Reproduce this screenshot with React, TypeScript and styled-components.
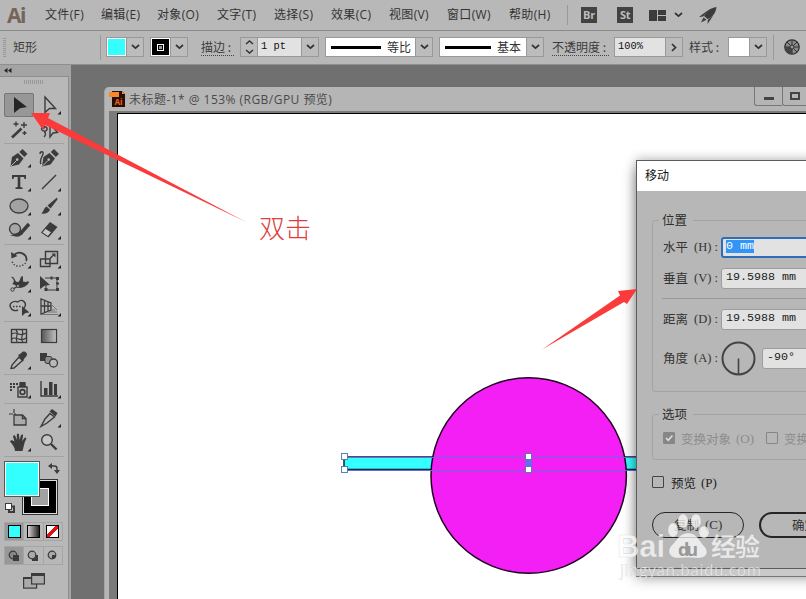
import React from "react";
import styled, { createGlobalStyle, css } from "styled-components";

const sans = `"Noto Sans CJK SC", "Noto Sans", sans-serif`;
const ui = `"Open Sans", "Noto Sans CJK SC", sans-serif`;
const serif = `"Liberation Serif", "Noto Sans CJK SC", serif`;
const mono = `"Liberation Mono", "Noto Sans CJK SC", monospace`;
const ink = "#3b3b3b";
const chrome = "#b8b8b8";

const Global = createGlobalStyle`
  * { box-sizing: border-box; }
  body { margin: 0; background: #707070; overflow: hidden; }
`;

const Shell = styled.div`
  position: relative;
  width: 806px;
  height: 599px;
  overflow: hidden;
  display: flex;
  flex-direction: column;
  background: #707070;
  color: ${ink};
  font: 12px/16px ${ui};
  white-space: pre;
`;

/* ---------- menu bar ---------- */
const MenuBar = styled.header`
  display: flex;
  align-items: center;
  flex: none;
  height: 31px;
  background: ${chrome};
  border-bottom: 1px solid #8b8b8b;
`;
const Logo = styled.div`
  width: 45px;
  padding-left: 7px;
  font: 700 21px/28px "Open Sans", sans-serif;
  letter-spacing: -1.4px;
  color: #75645a;
`;
const MenuItem = styled.div<{ $w: number }>`
  width: ${(p) => p.$w}px;
  color: #333;
  letter-spacing: 0.35px;
`;
const Rule = styled.div<{ $h: number; $mr: number }>`
  width: 1px;
  height: ${(p) => p.$h}px;
  margin-right: ${(p) => p.$mr}px;
  background: #999;
`;
const AppTile = styled.div<{ $mr: number }>`
  width: 16px;
  height: 16px;
  margin-right: ${(p) => p.$mr}px;
  background: #424242;
  color: #bdbdbd;
  font: 700 11px/16px "Open Sans", sans-serif;
  text-align: center;
  letter-spacing: -0.3px;
`;
const Icon = styled.svg<{ $mr?: number }>`
  display: block;
  flex: none;
  margin-right: ${(p) => p.$mr ?? 0}px;
  overflow: visible;
`;

/* ---------- options bar ---------- */
const OptionsBar = styled.div`
  display: flex;
  align-items: center;
  flex: none;
  height: 34px;
  padding: 0 0 1px 3px;
  background: ${chrome};
  border-bottom: 1px solid #8f8f8f;
`;
const Grip = styled.div<{ $w: number; $h: number; $mr?: number }>`
  width: ${(p) => p.$w}px;
  height: ${(p) => p.$h}px;
  margin-right: ${(p) => p.$mr ?? 0}px;
  background: repeating-linear-gradient(
    ${(p) => (p.$h > p.$w ? "180deg" : "90deg")},
    #989898 0 1px,
    ${chrome} 1px 2px
  );
`;
const BarText = styled.div<{ $w: number }>`
  width: ${(p) => p.$w}px;
  font: 12px/16px ${sans};
`;
const BarLink = styled.div<{ $w: number; $mr: number }>`
  width: ${(p) => p.$w}px;
  margin-right: ${(p) => p.$mr}px;
  height: 17px;
  font: 12px/16px ${sans};
  border-bottom: 1px dotted #444;
`;
const Control = styled.div<{ $mr: number }>`
  display: flex;
  flex: none;
  height: 20px;
  margin-right: ${(p) => p.$mr}px;
  border: 1px solid #999;
`;
const Swatch = styled.div<{ $c: string; $w: number }>`
  display: flex;
  align-items: center;
  justify-content: center;
  width: ${(p) => p.$w}px;
  background: ${(p) => p.$c};
  border: 1px solid #fff;
`;
const StrokeMark = styled.div`
  width: 7px;
  height: 7px;
  border: 1px solid #fff;
  background: #999;
  box-shadow: inset 0 0 0 1px #000;
`;
const Drop = styled.div<{ $w?: number; $left?: boolean }>`
  display: flex;
  align-items: center;
  justify-content: center;
  width: ${(p) => p.$w ?? 17}px;
  background: #bcbcbc;
  border-${(p) => (p.$left ? "right" : "left")}: 1px solid #999;
`;
const BarField = styled.div<{ $w: number }>`
  width: ${(p) => p.$w}px;
  padding-left: 3px;
  background: #e2e2e2;
  color: #111;
  font: 10.4px/17px ${mono};
`;
const Profile = styled.div<{ $w: number }>`
  display: flex;
  align-items: center;
  gap: 6px;
  width: ${(p) => p.$w}px;
  padding-left: 5px;
  background: #fff;
  color: #333;
  font: 12px/18px ${sans};
`;
const StrokeSample = styled.div<{ $w: number }>`
  width: ${(p) => p.$w}px;
  height: 3px;
  background: #000;
`;

/* ---------- tool panel ---------- */
const Workspace = styled.div`
  display: flex;
  flex: 1;
  min-height: 0;
`;
const ToolPanel = styled.aside`
  display: flex;
  flex-direction: column;
  width: 71px;
  background: ${chrome};
  border-right: 2px solid #a4a4a4;
  box-shadow: inset -1px 0 #8e8e8e;
`;
const PanelHead = styled.div`
  display: flex;
  align-items: center;
  height: 12px;
  padding-left: 4px;
  background: #a4a4a4;
  border-bottom: 1px solid #8d8d8d;
`;
const GripRow = styled.div`
  display: flex;
  height: 16px;
  padding: 3px 0 0 24px;
`;
const ToolGroup = styled.div<{ $row?: number }>`
  display: grid;
  grid-template-columns: 30px 30px;
  grid-auto-rows: ${(p) => p.$row ?? 24}px;
  width: 60px;
  margin-left: 4px;
  padding: ${(p) => (p.$row ? "0" : "2px 0")};
  border-bottom: 1px solid #a2a2a2;
`;
const ToolCell = styled.div<{ $on?: boolean }>`
  display: flex;
  ${(p) =>
    p.$on &&
    css`
      height: 24px;
      background: #979797;
      outline: 1px solid #777;
      outline-offset: -1px;
      border-radius: 2px;
    `}
`;
const ColorArea = styled.div`
  height: 65px;
`;
const ModeRow = styled.div<{ $mb: number }>`
  display: flex;
  width: 59px;
  height: 19px;
  margin: 0 0 ${(p) => p.$mb}px 4px;
  border: 1px solid #a5a5a5;
`;
const ModeCell = styled.div<{ $on?: boolean }>`
  display: flex;
  align-items: center;
  justify-content: center;
  flex: 1;
  background: ${(p) => (p.$on ? "#989898" : "transparent")};
  & + & {
    border-left: 1px solid #a5a5a5;
  }
`;
const Chip = styled.div<{ $bg: string }>`
  width: 13px;
  height: 13px;
  border: 1px solid #000;
  background: ${(p) => p.$bg};
`;
const ScreenMode = styled.div`
  padding: 8px 0 0 23px;
`;

/* ---------- document ---------- */
const Desk = styled.main`
  display: flex;
  flex: 1;
  padding: 22px 0 0 33px;
`;
const DocWindow = styled.section`
  display: flex;
  flex-direction: column;
  flex: 1;
  border-top-left-radius: 5px;
  background: #b5b5b5;
  border-left: 1px solid #a2a2a2;
  overflow: hidden;
`;
const DocTitle = styled.div`
  display: flex;
  height: 24px;
  padding-left: 4px;
`;
const DocName = styled.div`
  flex: 1;
  padding: 5px 0 0 3px;
  color: #4a4a4a;
  letter-spacing: 0.47px;
`;
const WinButton = styled.div<{ $w: number }>`
  display: flex;
  align-items: center;
  justify-content: center;
  width: ${(p) => p.$w}px;
  height: 19px;
  border: solid #777;
  border-width: 0 0 1px 1px;
  border-bottom-left-radius: 3px;
`;
const DocBadge = styled.div`
  padding-top: 4px;
`;
const Gutter = styled.div`
  flex: 1;
  margin-left: 4px;
  padding: 2px 0 0 8px;
  background: #7b7b7b;
`;
const Artboard = styled.div`
  height: 100%;
  background: #fff;
  border: solid #000;
  border-width: 1px 0 0 1px;
  overflow: hidden;
`;

/* ---------- dialog ---------- */
const DialogBox = styled.div`
  position: absolute;
  left: 636px;
  top: 160px;
  width: 300px;
  height: 409px;
  background: #b7b7b7;
  border: 1px solid #5c5c5c;
  box-shadow: 0 8px 0 -1px #c9c9c9, 0 8px 0 0 #777, 0 8px 13px rgba(0, 0, 0, 0.45), 0 -2px 10px rgba(0, 0, 0, 0.2);
`;
const DialogTitle = styled.div`
  height: 30px;
  padding-left: 8px;
  background: #fff;
  color: #111;
  font: 12px/28px ${sans};
`;
const DialogBody = styled.div`
  display: flex;
  flex-direction: column;
  padding: 29px 0 0 15px;
`;
const FieldSet = styled.div<{ $h: number; $mb: number }>`
  height: ${(p) => p.$h}px;
  margin-bottom: ${(p) => p.$mb}px;
  padding-left: 9px;
  border: 1px solid #a3a3a3;
  border-radius: 3px;
`;
const Legend = styled.div`
  width: 34px;
  height: 18px;
  margin: -10px 0 7px -3px;
  padding-left: 3px;
  background: #b7b7b7;
  color: #2d2d2d;
  font: 12.5px/18px ${sans};
`;
const FieldRow = styled.div<{ $mb: number }>`
  display: flex;
  align-items: center;
  height: 22px;
  margin-bottom: ${(p) => p.$mb}px;
`;
const Cn = styled.span`
  font: 12.5px/18px ${sans};
`;
const FieldLabel = styled.div`
  display: flex;
  flex: none;
  align-items: center;
  gap: 6px;
  width: 59px;
  padding-left: 1px;
  color: #333;
  font: 12.5px/20px ${serif};
`;
const Key = styled.span`
  flex: none;
  width: 24px;
`;
const Input = styled.div<{ $focus?: boolean }>`
  width: 200px;
  height: 21px;
  flex: none;
  padding-left: ${(p) => (p.$focus ? 3 : 4)}px;
  background: #e2e2e2;
  border: ${(p) => (p.$focus ? "2px solid #2f6db8" : "1px solid #9d9d9d")};
  border-radius: 3px;
  color: #1b1b1b;
  font: 11.7px/${(p) => (p.$focus ? 14 : 16)}px ${mono};
`;
const Selected = styled.span`
  display: inline-block;
  height: 13px;
  line-height: 13px;
  background: #3295f5;
  color: #fff;
`;
const Divider = styled.div`
  height: 1px;
  margin-bottom: 9px;
  background: #999;
`;
const CheckRow = styled.div<{ $dim?: boolean; $mb?: number }>`
  display: flex;
  align-items: center;
  height: 18px;
  margin-bottom: ${(p) => p.$mb ?? 0}px;
  padding-left: ${(p) => (p.$dim ? 1 : 0)}px;
  color: ${(p) => (p.$dim ? "#8d8d8d" : "#222")};
  font: 13px/18px ${serif};
`;
const Box = styled.div<{ $dim?: boolean; $on?: boolean; $mr: number }>`
  width: 12px;
  height: 12px;
  flex: none;
  margin: 0 ${(p) => p.$mr}px 2px 0;
  border: 1px solid ${(p) => (p.$dim ? "#868686" : "#444")};
  border-radius: 1px;
  background: ${(p) => (p.$on ? "#868686" : "transparent")};
`;
const CheckText = styled.span<{ $w: number }>`
  display: flex;
  gap: 5px;
  width: ${(p) => p.$w}px;
`;
const Buttons = styled.div`
  display: flex;
  gap: 15px;
`;
const PillButton = styled.div<{ $main?: boolean }>`
  display: flex;
  align-items: center;
  gap: 6px;
  width: ${(p) => (p.$main ? 100 : 92)}px;
  height: 26px;
  padding-left: ${(p) => (p.$main ? 31 : 21)}px;
  border: ${(p) => (p.$main ? "2px" : "1.5px")} solid #262626;
  border-radius: 13px;
  color: #333;
  font: 13px/20px ${serif};
`;
const Overlay = styled.svg`
  position: absolute;
  left: 0;
  top: 0;
  pointer-events: none;
`;

/* ---------- icons ---------- */
const Chevron = ({ mr }: { mr?: number }) => (
  <Icon width="9" height="6" $mr={mr} viewBox="0 0 9 6">
    <path d="M1 1l3.500 3.200L8 1" fill="none" stroke="#333" strokeWidth="1.700" />
  </Icon>
);

const line = { fill: "none", stroke: ink, strokeWidth: 1.4 } as const;
const nib = (
  <>
    <path d="M-8.500 8.500L-7-1L-1-5L4.500 .5L0 6.500Z" fill={ink} />
    <path d="M.3-6L3.500-9L8.500-4L5.300-1Z" fill={ink} />
    <path d="M-8 8L-2.500 2.500" stroke={chrome} strokeWidth="1" />
    <circle cx="-1.800" cy="1.600" r="1.300" fill={chrome} />
  </>
);

const tools: Record<string, React.ReactNode> = {
  select: <path d="M-5-8L8 2L1 3.200L-5 8Z" fill="#262626" />,
  direct: <path d="M-4-8L6.500 3.500L.5 3.500L-4 7.500Z" {...line} />,
  wand: (
    <>
      <path d="M-7 7.500L2.500-1.500" stroke={ink} strokeWidth="2.600" />
      <path d="M-3-8.500v5M-5.500-6h5M5-8v6M2-5h6M5.500 1v4M3.500 3h4" stroke={ink} strokeWidth="1.300" />
    </>
  ),
  lasso: (
    <>
      <path d="M1-6L8.500 2.500L4 3L1 7Z" {...line} />
      <path d="M-2-2c-2-3-7-1-5 2c2 2 6 1 5-2c-1-2-4-1-3 1M-5 2c2 0 2 3 0 5" {...line} />
    </>
  ),
  pen: nib,
  curve: (
    <>
      <g transform="translate(1.500 0)">{nib}</g>
      <path d="M-9-4c0-3 4-3 3 0c-1 3-4 7-2 10" {...line} />
    </>
  ),
  type: <path d="M-7-7H7V-3H5.500L5-5H1.300V5L3.500 5.600V7H-3.500V5.600L-1.300 5V-5H-5L-5.500-3H-7Z" fill={ink} />,
  line: <path d="M-7 7L7-7" stroke={ink} strokeWidth="1.400" />,
  ellipse: <ellipse rx="9" ry="7" fill="#a2a2a2" stroke={ink} strokeWidth="1.300" />,
  brush: (
    <>
      <path d="M8-8.500L-1.500-.5L1.500 2.500L8.500-6.500Z" fill={ink} />
      <path d="M-2.500.5L1 3.500C-.5 7.500-4 8-8 7.500C-5 6-5.500 2-2.500.5Z" fill={ink} />
    </>
  ),
  shaper: (
    <>
      <circle cx="-4" cy="-1" r="5.500" fill="#a6a6a6" stroke={ink} strokeWidth="1.300" />
      <path d="M10-6L2 3" stroke={ink} strokeWidth="3.400" />
      <path d="M2 1L4 4L0 6.500C-3 7-5 6-9 5.500L-3 3.500Z" fill={ink} />
    </>
  ),
  eraser: (
    <>
      <path d="M1-8L8.500-3L-.5 7.500L-8 2.500Z" fill={ink} />
      <path d="M-3.500-1.500L-7 2.500L-1 6.500L2.500 2Z" fill="#c6c6c6" stroke={ink} />
    </>
  ),
  rotate: (
    <>
      <path d="M-5-4C0-9 8-5 7.500 1" {...line} strokeWidth="1.900" />
      <path d="M7.500 1C7 8-5 10-7 2" {...line} strokeDasharray="1.300 1.700" />
      <path d="M-8-7L-7.500-.5L-1.500-3Z" fill={ink} />
    </>
  ),
  scale: (
    <>
      <path d="M-3.500-7.500H8.500V4.500H-3.500ZM-8.500 0H1V7.500H-8.500Z" {...line} />
      <path d="M1-.5L5-4.500" stroke={ink} strokeWidth="1.400" />
      <path d="M2.500-5.500H6.500V-1.500Z" fill={ink} />
    </>
  ),
  warp: (
    <>
      <path d="M-8-6c4-1 3 4 6 5C1 0 1-6 3-7c2 0 0 6 2 6c2 1 4-2 5 0c0 2-5 6-9 6C-3 5-3 1-7 1C-4-1-5-4-8-6Z" fill={ink} />
      <path d="M-6 6L6-1" {...line} />
      <circle cx="-6.500" cy="6.500" r="1.700" fill={chrome} stroke={ink} />
      <circle cx="-1" cy="3" r="1.500" fill={chrome} stroke={ink} />
    </>
  ),
  free: (
    <>
      <path d="M-4-5H8V7H-3V2" {...line} strokeWidth="1" />
      <path d="M-9-7L1 2L-4 2.500L-9 6Z" fill={ink} />
      <path d="M7-6h3v3h-3zM7 5h3v3h-3zM-4.500 5h3v3h-3zM1.500-6.500h2v3h-2zM7-.5h3v2h-3z" fill={ink} />
    </>
  ),
  shape: (
    <>
      <path d="M-1-5C3-9 9-4 5 1M-1-5C-6-7-11-3-8 1C-7 4-3 4-1 3" {...line} />
      <path d="M-6-.5H3" {...line} strokeDasharray="1.500 1.500" />
      <path d="M3-1L10.500 5.500L6.500 6L3 9Z" fill={ink} />
    </>
  ),
  perspective: (
    <>
      <path d="M-8-8V7L2 3V-4ZM-8-1H2M-4.500-6V5.500M-1-5V4" {...line} strokeWidth="1.300" />
      <path d="M2-3L8 3M2 3H6M-1 5H8M-7 7.500H9" stroke="#777" strokeWidth="1" />
    </>
  ),
  mesh: (
    <>
      <rect x="-7.500" y="-6.500" width="15" height="13" {...line} />
      <path d="M-7-2C-2-6 0 2 7-3M-7 3C-3-1 1 7 7 2M-3-6C1-2-5 1-2 6M3-6C6-2 0 2 4 6" {...line} strokeWidth="1.200" />
    </>
  ),
  gradient: <rect x="-7.500" y="-6.500" width="15" height="13" fill="url(#toolFade)" stroke={ink} strokeWidth="1.200" />,
  dropper: (
    <>
      <path d="M0-3L3.500.5L-5 8L-8 8.500L-7 5Z" {...line} />
      <path d="M-1-5L1-6L4-8.500C7-9 9-6 7.500-4L5-1L4 1.500Z" fill={ink} />
    </>
  ),
  blend: (
    <>
      <path d="M-9-7H-2V1H-9Z" fill={ink} />
      <rect x="-4" y="-3.500" width="7" height="7" rx="2" fill="#8e8e8e" stroke={ink} />
      <circle cx="4.500" cy="3" r="4" fill={chrome} stroke={ink} strokeWidth="1.300" />
    </>
  ),
  spray: (
    <>
      <path d="M-1-2H8V8H-1ZM1-6H6V-3H1Z" {...line} />
      <path d="M1-7H6V-3H1Z" fill={ink} />
      <circle cx="3.500" cy="3" r="2.400" {...line} strokeWidth="1.600" />
      <path d="M-9-6h2v2h-2zM-6-6h2v2h-2zM-3-6h2v2h-2zM-9-3h2v2h-2zM-6-3h2v2h-2zM-9 0h2v2h-2z" fill={ink} />
    </>
  ),
  graph: (
    <>
      <path d="M-8-8V7H9" {...line} />
      <path d="M-5-1h3.500V6h-3.500zM0-7h3.500V6H0zM5-5h3V6h-3z" fill={ink} />
    </>
  ),
  artboard: (
    <>
      <path d="M-5-3H3.500L7 .5V7H-5Z" fill="#aaa" stroke={ink} strokeWidth="1.300" />
      <path d="M-10-4H-6M-5-9V-5M-5-4H-3" stroke={ink} strokeWidth="1.200" />
      <path d="M3.500-3V.5H7" {...line} />
    </>
  ),
  slice: (
    <>
      <path d="M1-4.500L5.500-1L-2 5L-8 8.500L-4 1Z" {...line} />
      <path d="M.5-6.500L3-9L8.500-5L6.500-1.500Z" fill={ink} />
    </>
  ),
  hand: (
    <path
      d="M-4 9C-4 6-6 3-9-.5C-8-2.500-6.500-1.500-4.500-.5L-6-5.500C-5.500-7.500-4-7-3.500-5.500L-2.200-2L-2.200-7.500C-1.500-9-.5-9 0-7.500L.5-2L2-7C3-8 4.500-7.500 4-6L3.200-1L5.500-4C6.500-5 8-4 7-2.500C5 1 5 4 3.500 9Z"
      fill={ink}
    />
  ),
  zoom: (
    <>
      <circle cx="-2" cy="-2" r="5.300" fill="#c6c6c6" stroke={ink} strokeWidth="1.400" />
      <path d="M2 2L7.500 7.500" stroke={ink} strokeWidth="2.400" />
    </>
  ),
};

const groups: { row?: number; items: string[] }[] = [
  { row: 25, items: ["select", "direct+", "wand", "lasso"] },
  { items: ["pen+", "curve", "type+", "line+", "ellipse+", "brush+", "shaper+", "eraser+"] },
  { items: ["rotate+", "scale+", "warp+", "free", "shape+", "perspective+"] },
  { items: ["mesh", "gradient", "dropper+", "blend"] },
  { items: ["spray+", "graph+"] },
  { items: ["artboard", "slice+", "hand+", "zoom"] },
];

const Tool = ({ id }: { id: string }) => {
  const name = id.replace("+", "");
  return (
    <ToolCell $on={name === "select"}>
      <Icon width="30" height="24" viewBox="-15 -12 30 24">
        {tools[name]}
        {id.endsWith("+") && <path d="M12 6V9.500H8.500Z" fill="#222" />}
      </Icon>
    </ToolCell>
  );
};

const menus: [string, number][] = [
  ["文件(F)", 56], ["编辑(E)", 56], ["对象(O)", 60], ["文字(T)", 57], ["选择(S)", 57],
  ["效果(C)", 58], ["视图(V)", 58], ["窗口(W)", 62], ["帮助(H)", 58],
];

const handles = [
  [344.5, 456.5],
  [344.5, 469.5],
  [528.5, 456.5],
  [528.5, 469.5],
];

const Label = ({ text, k }: { text: string; k: string }) => (
  <FieldLabel>
    <Cn>{text}</Cn>
    <Key>({k}) :</Key>
  </FieldLabel>
);

export default function App() {
  return (
    <Shell>
      <Global />
      <MenuBar>
        <Logo>Ai</Logo>
        {menus.map(([t, w]) => (
          <MenuItem key={t} $w={w}>{t}</MenuItem>
        ))}
        <Rule $h={20} $mr={13} />
        <AppTile $mr={20}>Br</AppTile>
        <AppTile $mr={16}>St</AppTile>
        <Icon width="17" height="11" $mr={8} viewBox="0 0 17 11">
          <path d="M0 0h8v11H0zM9 0h8v5H9zM9 6h8v5H9z" fill="#3c3c3c" />
        </Icon>
        <Chevron mr={16} />
        <Icon width="18" height="17" viewBox="0 0 18 17">
          <path d="M17.500 0C11 1 7 4 5 9L8.500 12C14 10 16.500 6 17.500 0Z" fill={ink} />
          <path d="M8.500 3.500L0 10L4.200 9.500ZM14 9L8.500 17L8.800 12.800ZM4.500 10.500L2 15.500L7.500 12.800Z" fill={ink} />
        </Icon>
      </MenuBar>

      <OptionsBar>
        <Grip $w={3} $h={19} $mr={7} />
        <BarText $w={87}>矩形</BarText>
        <Rule $h={25} $mr={5} />
        <Control $mr={6}>
          <Swatch $c="#3ff" $w={19} />
          <Drop><Chevron /></Drop>
        </Control>
        <Control $mr={13}>
          <Swatch $c="#000" $w={19}><StrokeMark /></Swatch>
          <Drop><Chevron /></Drop>
        </Control>
        <BarLink $w={33} $mr={6}>描边 :</BarLink>
        <Control $mr={6}>
          <Drop $left $w={17}>
            <Icon width="9" height="14" viewBox="0 0 9 14">
              <path d="M1 4l3.500-3L8 4M1 10l3.500 3L8 10" fill="none" stroke="#333" strokeWidth="1.500" />
            </Icon>
          </Drop>
          <BarField $w={43}>1 pt</BarField>
          <Drop><Chevron /></Drop>
        </Control>
        <Control $mr={6}>
          <Profile $w={89}><StrokeSample $w={50} />等比</Profile>
          <Drop><Chevron /></Drop>
        </Control>
        <Control $mr={8}>
          <Profile $w={86}><StrokeSample $w={46} />基本</Profile>
          <Drop><Chevron /></Drop>
        </Control>
        <BarLink $w={57} $mr={5}>不透明度 :</BarLink>
        <Control $mr={6}>
          <BarField $w={50}>100%</BarField>
          <Drop>
            <Icon width="6" height="9" viewBox="0 0 6 9">
              <path d="M1 1l3.500 3.500L1 8" fill="none" stroke="#333" strokeWidth="1.700" />
            </Icon>
          </Drop>
        </Control>
        <BarText $w={39}>样式 :</BarText>
        <Control $mr={6}>
          <Swatch $c="#fff" $w={20} />
          <Drop><Chevron /></Drop>
        </Control>
        <Rule $h={25} $mr={10} />
        <Icon width="16" height="16" viewBox="-8 -8 16 16">
          <circle r="7.200" fill="#8a8a8a" stroke="#333" strokeWidth="1.300" />
          <path d="M0-7V7M-7 0H7M-5-5L5 5M5-5L-5 5" stroke="#333" strokeWidth="1" />
          <path d="M0 0L-7 0A7 7 0 0 0 0 7Z" fill="#444" />
          <circle r="2" fill="#999" stroke="#333" />
        </Icon>
      </OptionsBar>

      <Workspace>
        <ToolPanel>
          <PanelHead>
            <Icon width="8" height="5" viewBox="0 0 8 5">
              <path d="M3.500 0v5L0 2.500zM7.500 0v5L4 2.500z" fill="#222" />
            </Icon>
          </PanelHead>
          <GripRow><Grip $w={20} $h={4} /></GripRow>
          {groups.map((g, i) => (
            <ToolGroup key={i} $row={g.row}>
              {g.items.map((id) => <Tool key={id} id={id} />)}
            </ToolGroup>
          ))}
          <ColorArea>
            <Icon width="68" height="61" viewBox="0 457 68 61">
              <defs>
                <linearGradient id="toolFade"><stop stopColor="#555" /><stop offset="1" stopColor="#c4c4c4" /></linearGradient>
              </defs>
              <rect x="22.500" y="479.500" width="35" height="35" fill="#000" stroke="#333" />
              <rect x="23.500" y="480.500" width="33" height="33" fill="#000" stroke="#ddd" />
              <rect x="31.500" y="488.500" width="17" height="17" fill="#a2a2a2" stroke="#fff" />
              <rect x="4.500" y="461.500" width="35" height="35" fill="#3ff" stroke="#555" />
              <rect x="5.500" y="462.500" width="33" height="33" fill="#3ff" stroke="#fff" />
              <path d="M51 466H54.500Q57 466 57 468.500V471" fill="none" stroke={ink} strokeWidth="1.400" />
              <path d="M52 463V469L48 466ZM54 470H60L57 474Z" fill={ink} />
              <path d="M9 506.500H14V512H9Z" fill={chrome} stroke={ink} strokeWidth="2" />
              <rect x="5.500" y="503.500" width="6" height="6" fill="#fff" stroke={ink} />
            </Icon>
          </ColorArea>
          <ModeRow $mb={5}>
            <ModeCell $on><Chip $bg="#3ff" /></ModeCell>
            <ModeCell><Chip $bg="linear-gradient(90deg,#d8d0d0,#222)" /></ModeCell>
            <ModeCell><Chip $bg="linear-gradient(135deg,#fff 38%,#d11 39% 61%,#fff 62%)" /></ModeCell>
          </ModeRow>
          <ModeRow $mb={0}>
            {[0, 1, 2].map((n) => (
              <ModeCell key={n} $on={n === 0}>
                <Icon width="12" height="12" viewBox="0 0 12 12">
                  {n < 2 && <path d="M5 5H11V11H5Z" fill={ink} />}
                  <circle cx="5" cy="5" r="3.800" fill={n === 0 ? "#888" : "#aaa"} stroke={ink} strokeWidth="1.200" />
                  {n !== 1 && <path d="M5 5H9V7L7 9H5Z" fill={ink} />}
                </Icon>
              </ModeCell>
            ))}
          </ModeRow>
          <ScreenMode>
            <Icon width="22" height="16" viewBox="0 0 22 16">
              <rect x=".6" y="4.600" width="13" height="10.500" fill="#aaa" stroke={ink} strokeWidth="1.200" />
              <path d="M0 4H8V6H0Z" fill={ink} />
              <rect x="8.600" y="1" width="12.800" height="10" fill="#aaa" stroke={ink} strokeWidth="1.200" />
              <path d="M8 0H22V3H8Z" fill={ink} />
            </Icon>
          </ScreenMode>
        </ToolPanel>

        <Desk>
          <DocWindow>
            <DocTitle>
              <DocBadge>
                <Icon width="17" height="16" viewBox="0 0 17 16">
                  <path d="M3 0H13L16 3V16H3Z" fill="#2c0d04" />
                  <path d="M0 1H10V6H0Z" fill="#f58a25" />
                  <path d="M13 0V3H16Z" fill="#f58a25" />
                  <text x="5.500" y="13.500" fontSize="8" fontWeight="700" fontFamily="Open Sans" fill="#f06a20">Ai</text>
                </Icon>
              </DocBadge>
              <DocName>未标题-1* @ 153% (RGB/GPU 预览)</DocName>
              <WinButton $w={28}>
                <Icon width="10" height="8" viewBox="0 0 10 8"><path d="M0 5H10V8H0Z" fill="#444" /></Icon>
              </WinButton>
              <WinButton $w={24}>
                <Icon width="10" height="8" viewBox="0 0 10 8"><rect x="1" y="1" width="8" height="6" fill="none" stroke="#444" strokeWidth="2" /></Icon>
              </WinButton>
            </DocTitle>
            <Gutter>
              <Artboard>
                <Icon width="688" height="485" viewBox="118 114 688 485">
                  <rect x="344" y="457" width="320" height="12.500" fill="#3ff" stroke="#16284e" strokeWidth="1.600" />
                  <circle cx="528.700" cy="475.500" r="97.700" fill="#f41ff4" stroke="#200020" strokeWidth="1.500" />
                  <path d="M344 457.500H660M344 470.500H660" stroke="#6b6bd8" strokeWidth="1" />
                  <rect x="525.500" y="459" width="6" height="7.500" fill="#5b72ee" />
                  {handles.map(([x, y]) => (
                    <rect key={`${x}-${y}`} x={x - 3} y={y - 3} width="6" height="6" fill="#fff" stroke="#4a76a8" strokeWidth=".9" />
                  ))}
                </Icon>
              </Artboard>
            </Gutter>
          </DocWindow>
        </Desk>
      </Workspace>

      <DialogBox>
        <DialogTitle>移动</DialogTitle>
        <DialogBody>
          <FieldSet $h={172} $mb={22}>
            <Legend>位置</Legend>
            <FieldRow $mb={9}><Label text="水平" k="H" /><Input $focus><Selected>0 mm</Selected></Input></FieldRow>
            <FieldRow $mb={9}><Label text="垂直" k="V" /><Input>19.5988 mm</Input></FieldRow>
            <Divider />
            <FieldRow $mb={17}><Label text="距离" k="D" /><Input>19.5988 mm</Input></FieldRow>
            <FieldRow $mb={0}>
              <Label text="角度" k="A" />
              <Icon width="35" height="35" $mr={6} viewBox="-17.500 -17.500 35 35">
                <circle r="16" fill="none" stroke="#444" strokeWidth="2" />
                <path d="M0 0V16" stroke="#444" strokeWidth="1.600" />
              </Icon>
              <Input>-90°</Input>
            </FieldRow>
          </FieldSet>
          <FieldSet $h={46} $mb={14}>
            <Legend>选项</Legend>
            <CheckRow $dim>
              <Box $dim $on $mr={6}>
                <Icon width="10" height="10" viewBox="0 0 10 10"><path d="M2 5l2.200 2.300L8.500 2.500" fill="none" stroke="#ddd" strokeWidth="1.600" /></Icon>
              </Box>
              <CheckText $w={85}><Cn>变换对象</Cn>(O)</CheckText>
              <Box $dim $mr={6} />
              <CheckText $w={60}><Cn>变换图案</Cn></CheckText>
            </CheckRow>
          </FieldSet>
          <CheckRow $mb={20}>
            <Box $mr={7} />
            <CheckText $w={60}><Cn>预览</Cn>(P)</CheckText>
          </CheckRow>
          <Buttons>
            <PillButton><Cn>复制</Cn>(C)</PillButton>
            <PillButton $main><Cn>确定</Cn></PillButton>
          </Buttons>
        </DialogBody>
      </DialogBox>

      <Overlay width="806" height="599" viewBox="0 0 806 599">
        <path d="M31 113L50 113L48 118L246 222L45 125L43 130Z" fill="#fb3b3b" />
        <path d="M637 289L618 291L620 295.500L542 349.500L624 302L627 304Z" fill="#fb3b3b" />
        <text x="259" y="238" fontSize="26" fontWeight="300" fontFamily="Noto Sans CJK SC, sans-serif" fill="#e03c3c">双击</text>
        <g fill="#fff" fillOpacity=".72" stroke="#999" strokeOpacity=".3" strokeWidth=".6">
          <text x="617" y="557" fontSize="31" fontWeight="700" fontFamily="Liberation Sans, sans-serif" textLength="48">Bai</text>
          <path d="M688 533C679 533 676 542 671 546C666 552 671 559 679 558Q688 557 697 558C706 559 710 552 704 546C699 541 697 533 688 533Z" />
          <ellipse cx="673" cy="530" rx="5" ry="7" />
          <ellipse cx="683" cy="521" rx="5" ry="7" />
          <ellipse cx="696" cy="521" rx="5" ry="7" />
          <ellipse cx="704" cy="532" rx="5" ry="6" />
          <text x="711" y="556" fontSize="25" fontWeight="700" fontFamily="Noto Sans CJK SC, sans-serif" textLength="49">经验</text>
          <text x="620" y="576" fontSize="15.500" fontFamily="Open Sans, sans-serif" textLength="141">jingyan.baidu.com</text>
        </g>
        <text x="678" y="556" fontSize="18" fontWeight="700" fontFamily="Open Sans, sans-serif" fill="#999" textLength="20">du</text>
      </Overlay>
    </Shell>
  );
}
